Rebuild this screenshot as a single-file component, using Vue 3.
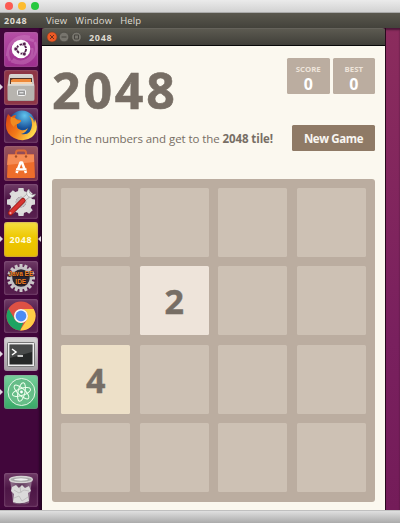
<script setup>
const launchers = [
  { id: 'ubuntu' },
  { id: 'files', running: true },
  { id: 'firefox' },
  { id: 'software' },
  { id: 'settings' },
  { id: 'game', running: true, active: true },
  { id: 'eclipse' },
  { id: 'chrome' },
  { id: 'terminal', running: true },
  { id: 'atom', running: true },
  { id: 'trash' },
]
const cells = [0, 0, 0, 0, 0, 2, 0, 0, 4, 0, 0, 0, 0, 0, 0, 0]
const teeth = [0, 45, 90, 135, 180, 225, 270, 315]
const spikes = Array.from({ length: 16 }, (_, i) => i * 22.5)
</script>

<template>
  <div class="screen">
    <header class="mac-bar">
      <i class="light red"></i><i class="light yellow"></i><i class="light green"></i>
    </header>
    <nav class="menu-bar">
      <b>2048</b><span>View</span><span>Window</span><span>Help</span>
    </nav>
    <div class="desktop">
      <aside class="launcher">
        <div v-for="l in launchers" :key="l.id" class="slot" :class="[l.id, { running: l.running, active: l.active }]">
          <div class="icon">
            <svg v-if="l.id === 'ubuntu'" viewBox="0 0 34 34">
              <path d="M3 24C4 9 16 3 30 9M6 29C-1 14 12 1 26 5M31 10C36 25 22 36 7 29M28 16C31 26 18 34 9 27" fill="none" stroke="#d793cb" stroke-width="2.5" opacity=".35" />
              <circle cx="17" cy="17" r="9.3" fill="#fff" />
              <circle cx="17.5" cy="17" r="4.6" fill="none" stroke="#54204e" stroke-width="1.9" stroke-dasharray="8 1.6" />
              <g fill="#54204e" stroke="#fff" stroke-width=".6"><circle cx="11.8" cy="17" r="1.9" /><circle cx="20.3" cy="12" r="1.9" /><circle cx="20.3" cy="22" r="1.9" /></g>
            </svg>
            <svg v-else-if="l.id === 'files'" viewBox="0 0 34 34">
              <defs><linearGradient id="cab" x2="0" y2="1"><stop stop-color="#d9d6d2" /><stop offset="1" stop-color="#a7a4a0" /></linearGradient></defs>
              <path d="M5 5.5Q5 4 7 4H27Q29 4 29 5.5L30.5 16V29Q30.5 31 29 31H5Q3.5 31 3.5 29V16Z" fill="url(#cab)" />
              <path d="M6 8H28V14H6Z" fill="#55352a" /><path d="M7 10L9 9H27V14H7Z" fill="#ee8838" /><path d="M7 12H28V14H7Z" fill="#f5d5b4" />
              <path d="M4 15H30V30H4Z" fill="#b7b4af" /><path d="M4 15H30" stroke="#efedea" />
              <rect x="13.5" y="20" width="8" height="5.5" rx="1" fill="#999" stroke="#f5f5f5" /><path d="M15.5 22.8H19.5" stroke="#fff" />
            </svg>
            <svg v-else-if="l.id === 'firefox'" viewBox="0 0 34 34">
              <defs>
                <radialGradient id="globe" cx=".6" cy=".2"><stop stop-color="#62c4ee" /><stop offset="1" stop-color="#174f98" /></radialGradient>
                <linearGradient id="fox" x1="0" x2="1" y2=".5"><stop stop-color="#d64313" /><stop offset=".55" stop-color="#f37b18" /><stop offset="1" stop-color="#ffd94c" /></linearGradient>
              </defs>
              <circle cx="18" cy="15.5" r="13" fill="url(#globe)" />
              <path d="M4 6L7 9Q9 7 12 7L11 10Q13 12 17 12Q17 15 13 16Q12 21 17 22Q21 23 24 20Q22 25 17 26Q27 28 28 17Q28 11 25 8Q30 10 30 15L31 11Q36 22 28 29Q20 35 10 30Q1 25 2 15Q2 10 4 6Z" fill="url(#fox)" />
              <path d="M7 9Q10 10 11 10Q13 13 17 13Q15 15 13 16Q10 17 10 19Q5 15 7 9" fill="#ef8b21" />
            </svg>
            <svg v-else-if="l.id === 'software'" viewBox="0 0 34 34">
              <path d="M12 9V6Q12 3.5 14 3.5H20Q22 3.5 22 6V9" fill="none" stroke="#d96837" stroke-width="2" />
              <path d="M4 7.5H30L31 30Q31 31 30 31H4Q3 31 3 30Z" fill="#ed6d2b" /><path d="M4 7.5H30V15L3 18Z" fill="#f58b55" />
              <circle cx="12" cy="9.5" r="1.2" fill="#a44e2c" /><circle cx="22" cy="9.5" r="1.2" fill="#a44e2c" />
              <path d="M12.5 26L16.5 15.5H18L22 26M12 22.5H22.5" fill="none" stroke="#fff" stroke-width="2.5" stroke-linejoin="round" /><path d="M11.5 23.5H22.5" stroke="#f4b58f" />
            </svg>
            <svg v-else-if="l.id === 'settings'" viewBox="0 0 34 34">
              <g fill="#d9d9d9"><path v-for="a in teeth" :key="a" d="M13.5 9L14.5 3H19.5L20.5 9Z" :transform="`rotate(${a} 17 17)`" /></g>
              <circle cx="17" cy="17" r="8.2" fill="none" stroke="#dededc" stroke-width="6" /><circle cx="17" cy="17" r="5.3" fill="#c2bfc0" />
              <path d="M18 16L26 9" stroke="#aaa7a9" stroke-width="4.4" /><path d="M18 16L26 9" stroke="#e4e3e3" stroke-width="3" /><path d="M25 4A4.5 4.5 0 1 0 31.5 9L28 10L25.5 8Z" fill="#eee" stroke="#999" stroke-width=".6" />
              <path d="M6.5 28L19 15.5" stroke="#8f1715" stroke-width="5.2" stroke-linecap="round" /><path d="M6.5 28L19 15.5" stroke="#d73531" stroke-width="3.8" stroke-linecap="round" /><circle cx="6.5" cy="28" r="1" fill="#f4aaa5" />
            </svg>
            <b v-else-if="l.id === 'game'">2048</b>
            <template v-else-if="l.id === 'eclipse'">
              <svg viewBox="0 0 34 34">
                <g fill="#ccc8ca"><rect v-for="a in spikes" :key="a" x="15.5" y="3" width="3" height="6" :transform="`rotate(${a} 17 17)`" /></g>
                <circle cx="17" cy="17" r="10" fill="#2b2530" stroke="#c5c1c4" stroke-width="2.5" />
              </svg>
              <div class="caption"><span>Java EE</span><span>IDE</span></div>
            </template>
            <svg v-else-if="l.id === 'chrome'" viewBox="0 0 34 34">
              <circle cx="17" cy="17" r="14.5" fill="#dd5144" />
              <path d="M17 10H29.7A14.5 14.5 0 0 1 16 31.5L23 20.5A7 7 0 0 0 17 10Z" fill="#ffcd46" />
              <path d="M4.5 9.7L10.9 20.5A7 7 0 0 0 19.5 23.5L16 31.5A14.5 14.5 0 0 1 4.5 9.7Z" fill="#1da462" />
              <circle cx="17" cy="17" r="7" fill="#f7f8f5" /><circle cx="17" cy="17" r="5.4" fill="#4c8bf5" />
            </svg>
            <svg v-else-if="l.id === 'terminal'" viewBox="0 0 34 34">
              <rect x="3.5" y="5.5" width="27" height="24" rx="1" fill="#eee" stroke="#777" /><rect x="5.5" y="7.5" width="23" height="20" fill="#252727" />
              <path d="M6 8H28V15L6 21Z" fill="#484a4a" /><path d="M8 12L12 15L8 18M13.5 19H19" fill="none" stroke="#fff" stroke-width="1.5" />
            </svg>
            <svg v-else-if="l.id === 'atom'" viewBox="0 0 34 34">
              <circle cx="17.5" cy="17" r="13.5" fill="#66bd88" stroke="#e5f5e6" stroke-width="1" />
              <g fill="none" stroke="#efffed" stroke-width="1"><ellipse v-for="a in [-18, 42, 102]" :key="a" cx="17.5" cy="17" rx="9.5" ry="3.5" :transform="`rotate(${a} 17.5 17)`" /></g>
              <circle cx="17.5" cy="17" r="1.4" fill="#fff" />
            </svg>
            <svg v-else viewBox="0 0 34 34">
              <defs><linearGradient id="glass"><stop stop-color="#93738f" /><stop offset=".5" stop-color="#603a5c" /><stop offset="1" stop-color="#93738f" /></linearGradient></defs>
              <path d="M6 6H28L25 30Q17 33 9 30Z" fill="url(#glass)" />
              <path d="M8 14L12 12L15 15L18 12L21 15L25 13L27 18L24 20L25 28Q17 32 9 29L10 21L7 18Z" fill="#dbdada" />
              <path d="M10 17L15 20L20 17L25 18M10 25L15 23L18 28L24 24M16 14L17 20" stroke="#c0bebf" fill="none" />
              <ellipse cx="17" cy="6.5" rx="11.3" ry="3" fill="#aaa" stroke="#d5d3d3" stroke-width="1.5" /><ellipse cx="17" cy="6.5" rx="7" ry="1.2" fill="#eee" />
            </svg>
          </div>
        </div>
      </aside>
      <section class="window">
        <div class="title-bar">
          <svg width="36" height="12" viewBox="0 0 36 12">
            <circle cx="6" cy="6" r="5" fill="#ee5a25" stroke="#743a26" stroke-width=".6" /><path d="M4 4L8 8M8 4L4 8" stroke="#71311c" />
            <circle cx="18" cy="6" r="4.8" fill="#77756d" stroke="#45433d" stroke-width=".6" /><path d="M15.5 6H20.5" stroke="#46443f" />
            <circle cx="30.5" cy="6" r="4.8" fill="#77756d" stroke="#45433d" stroke-width=".6" /><path d="M28.5 4H32.5V8H28.5Z" fill="none" stroke="#46443f" />
          </svg>
          <b>2048</b>
        </div>
        <main>
          <div class="heading">
            <h1>2048</h1>
            <div class="scores">
              <div class="score"><small>SCORE</small><b>0</b></div>
              <div class="score"><small>BEST</small><b>0</b></div>
            </div>
          </div>
          <div class="intro">
            <p>Join the numbers and get to the <b>2048 tile!</b></p>
            <button>New Game</button>
          </div>
          <div class="board">
            <div v-for="(n, i) in cells" :key="i" class="cell" :class="n && `tile-${n}`">{{ n || '' }}</div>
          </div>
        </main>
      </section>
    </div>
    <footer></footer>
  </div>
</template>

<style>
body { margin: 0; overflow: hidden; }
</style>
<style scoped>
* { box-sizing: border-box; }
.screen { width: 400px; height: 523px; display: flex; flex-direction: column; font-family: "Open Sans", sans-serif; }
.mac-bar { height: 13px; flex: none; display: flex; gap: 5px; padding: 2px 5px; background: linear-gradient(#ebebeb, #d2d2d2); border-bottom: 1px solid #aaa; }
.light { width: 8px; height: 8px; border-radius: 50%; }
.red { background: #fc5b53; }
.yellow { background: #fdbc2f; }
.green { background: #27c83e; }
.menu-bar { height: 15px; flex: none; display: flex; align-items: center; padding-left: 4px; background: linear-gradient(#5a584e, #43423b); color: #dfdbd2; font: 9.5px/15px "Open Sans", sans-serif; }
.menu-bar b { width: 42px; font-size: 9px; letter-spacing: .7px; }
.menu-bar span { margin-right: 8px; letter-spacing: .15px; }
.desktop { height: 482px; flex: none; display: flex; background: linear-gradient(#8b2c5d, #79205e 65%, #741c59); box-shadow: inset 0 2px 2px #4b1737; }
.launcher { width: 42px; flex: none; display: flex; flex-direction: column; gap: 3.6px; padding: 4px 0 3px; background: #41063b; border-right: 1px solid #250420; box-shadow: inset -2px 0 2px #2b0529; }
.slot { height: 34.5px; flex: none; padding-left: 3.5px; position: relative; }
.icon { width: 34.5px; height: 34.5px; border-radius: 3px; background: linear-gradient(#6f3b66, #4d1646 45%, #58204f); box-shadow: inset 0 0 2px #a07898; display: flex; align-items: center; justify-content: center; position: relative; }
.icon svg { width: 34px; height: 34px; display: block; }
.ubuntu .icon { background: linear-gradient(#b64fa6, #9c2d8d); }
.files .icon { background: #8d3545; }
.software .icon { background: linear-gradient(#98545d, #762c45); }
.game .icon { background: linear-gradient(#f5df42, #eec800 45%, #e8bd00); color: #fffbdc; font-size: 9px; letter-spacing: .5px; }
.terminal .icon { background: linear-gradient(#d6d5d5, #a29ea2); }
.atom .icon { background: linear-gradient(#77cf9b, #38a967); }
.caption { position: absolute; inset: 9px -3px auto; display: flex; flex-direction: column; align-items: center; font: bold 6.5px/8px "Liberation Sans", sans-serif; color: #ed8226; text-shadow: 0 0 1px #201010, 0 1px 1px #201010; white-space: nowrap; }
.running::before, .active::after { content: ""; position: absolute; top: 14px; border: 3px solid transparent; }
.running::before { left: 0; border-left-color: #dfd6df; border-right: 0; }
.active::after { right: 0; border-right-color: #dfd6df; border-left: 0; }
.trash { margin-top: auto; }
.window { width: 344px; flex: none; display: flex; flex-direction: column; border-right: 1px solid #28091d; }
.title-bar { height: 18px; flex: none; display: flex; align-items: center; padding-left: 4px; gap: 7px; color: #dfdbd2; background: linear-gradient(#5c5a51, #403f39); border-top: 1px solid #65635b; border-bottom: 1px solid #080808; border-radius: 3px 3px 0 0; font-size: 9px; letter-spacing: .7px; }
main { flex: 1; background: #fbf8ef; padding: 12px 10px 0; color: #776e65; }
.heading { display: flex; justify-content: space-between; height: 67px; }
h1 { margin: 10px 0 0; font: bold 50px/44px "Open Sans", sans-serif; letter-spacing: 2.8px; -webkit-text-stroke: .6px #776e65; }
.scores { display: flex; gap: 3px; }
.score { width: 42.5px; height: 35.5px; display: flex; flex-direction: column; align-items: center; background: #bbada0; border-radius: 1.5px; }
.score small { font: bold 7.8px/10px "Open Sans", sans-serif; color: #eee4da; margin-top: 6px; }
.score b { font: bold 16px/20px "Open Sans", sans-serif; color: white; }
.intro { display: flex; justify-content: space-between; height: 53.5px; white-space: nowrap; }
p { margin: 0; font: 11.5px/28px "Open Sans", sans-serif; letter-spacing: -.07px; }
p b { letter-spacing: -.1px; }
button { width: 83px; height: 26px; padding: 0; border: 0; border-radius: 1.5px; background: #8f7a66; color: #f9f6f2; font: bold 11.5px/27px "Open Sans", sans-serif; letter-spacing: -.4px; }
.board { height: 323px; display: grid; grid-template: repeat(4, 69px) / repeat(4, 69px); gap: 9.4px 9.6px; padding: 9.4px 9.2px; background: #bbada0; border-radius: 3px; }
.cell { border-radius: 1.5px; background: #cdc1b4; font: bold 34px/70px "Open Sans", sans-serif; text-align: center; -webkit-text-stroke: .4px #776e65; }
.tile-2 { background: #eee4da; }
.tile-4 { background: #ede0c8; }
footer { flex: 1; border-top: 1px solid #c0c0c0; background: linear-gradient(#e0e0e0, #aaa); }
</style>
